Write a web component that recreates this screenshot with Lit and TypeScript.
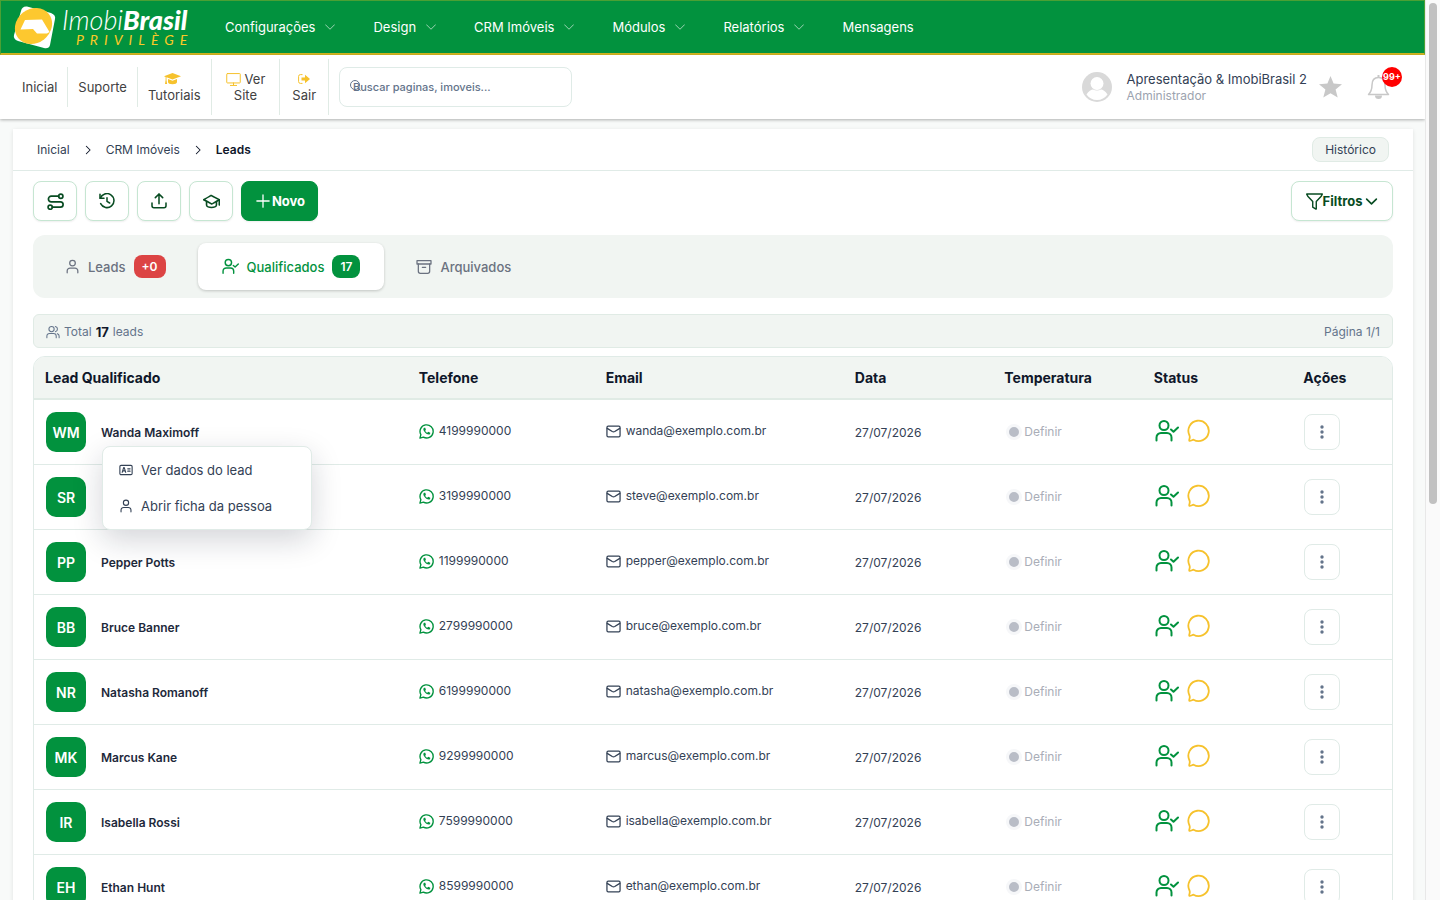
import { LitElement, html, css, svg, nothing } from "lit";
import { customElement, property } from "lit/decorators.js";

interface Lead {
  initials: string;
  name: string;
  phone: string;
  email: string;
}

const leads: Lead[] = [
  { initials: "WM", name: "Wanda Maximoff", phone: "4199990000", email: "wanda@exemplo.com.br" },
  { initials: "SR", name: "", phone: "3199990000", email: "steve@exemplo.com.br" },
  { initials: "PP", name: "Pepper Potts", phone: "1199990000", email: "pepper@exemplo.com.br" },
  { initials: "BB", name: "Bruce Banner", phone: "2799990000", email: "bruce@exemplo.com.br" },
  { initials: "NR", name: "Natasha Romanoff", phone: "6199990000", email: "natasha@exemplo.com.br" },
  { initials: "MK", name: "Marcus Kane", phone: "9299990000", email: "marcus@exemplo.com.br" },
  { initials: "IR", name: "Isabella Rossi", phone: "7599990000", email: "isabella@exemplo.com.br" },
  { initials: "EH", name: "Ethan Hunt", phone: "8599990000", email: "ethan@exemplo.com.br" },
];

const date = "27/07/2026";

/* Line icons on a 24-unit grid, coloured by currentColor. */
const icons: Record<string, unknown> = {
  down: svg`<path d="M3 7.500l9 9 9-9"/>`,
  right: svg`<path d="M8 3l9 9-9 9"/>`,
  route: svg`<circle cx="4.500" cy="20" r="3"/><circle cx="19.500" cy="4.500" r="3"/><path d="M16.500 4.500H6a4 4 0 0 0 0 8h13a3.700 3.700 0 0 1 0 7.500H7.500"/>`,
  history: svg`<path d="M1.500 2v6h6"/><path d="M2 8A10.500 10.500 0 1 1 2.500 16"/><path d="M12 7v5.500l4 2.500"/>`,
  upload: svg`<path d="M12 16V2"/><path d="M6.500 7L12 1.500 17.500 7"/><path d="M1.500 15v4a3 3 0 0 0 3 3h15a3 3 0 0 0 3-3v-4"/>`,
  grad: svg`<path d="M1 9.500Q12 3 12 3.500T23 9.500Q12 16 12 15.500T1 9.500z"/><path d="M5 12v5c0 2 3.500 3.500 7 3.500s7-1.500 7-3.500v-5"/><path d="M23 9.500V17"/>`,
  plus: svg`<path d="M12 1.500v21M1.500 12h21"/>`,
  funnel: svg`<path d="M1 1.500h22l-1.500 3L14.500 12v10.500h-1l-4-2.500v-8l-7-7.500z"/>`,
  user: svg`<circle cx="12" cy="6.500" r="4.500"/><path d="M3.500 22v-3a4.500 4.500 0 0 1 4.500-4.500h8a4.500 4.500 0 0 1 4.500 4.500v3"/>`,
  userCheck: svg`<circle cx="9" cy="6.500" r="4.500"/><path d="M1.500 21.500v-3a4.500 4.500 0 0 1 4.500-4.500h6a4.500 4.500 0 0 1 4.500 4.500v3"/><path d="M16 10.500l2.500 2.300 4.500-4.300"/>`,
  users: svg`<circle cx="9.500" cy="7" r="4.500"/><path d="M1.500 22v-3a4.500 4.500 0 0 1 4.500-4.500h7a4.500 4.500 0 0 1 4.500 4.500v3"/><path d="M16 2.500a4.600 4.600 0 0 1 0 9"/><path d="M22.500 22v-3a4.500 4.500 0 0 0-3-4.200"/>`,
  archive: svg`<path d="M1.500 2.500h21v5h-21z"/><path d="M3.500 7.500v11a3 3 0 0 0 3 3h11a3 3 0 0 0 3-3v-11"/><path d="M9.500 12.500h5"/>`,
  mail: svg`<rect x="1.500" y="3.500" width="21" height="17" rx="2"/><path d="M2 7l8 5q2 1 4 0l8-5"/>`,
  chat: svg`<path d="M2.500 16.500A10.200 10.200 0 1 1 6.500 20.700C5 21 4 22 2.300 21.800 1.800 20.500 3.500 19 2.500 16.500z"/>`,
  card: svg`<rect x="1.500" y="4" width="21" height="16" rx="2"/><path d="M5.500 16l2.500-8h1l2.500 8M6.500 13.500h4M15 10h4M15 14h4"/>`,
  monitor: svg`<rect x="1.200" y="2.500" width="21.600" height="15" rx="1"/><path d="M7 21.500h10M12 17.500v4"/>`,
};

const icon = (name: string, size: number, width = 2) => html`<svg
  class="ico" width=${size} height=${size} viewBox="0 0 24 24" fill="none" stroke="currentColor"
  stroke-width=${width} stroke-linecap="round" stroke-linejoin="round" aria-hidden="true">${icons[name]}</svg>`;

const shared = css`
  :host { display: block; font-family: Inter, "Noto Sans", sans-serif; }
  *, *::before, *::after { box-sizing: border-box; }
  .ico { display: block; flex: none; }
  a { color: inherit; text-decoration: none; }
  button { font: inherit; color: inherit; cursor: pointer; margin: 0; }
`;

@customElement("main-nav")
export class MainNav extends LitElement {
  static styles = [shared, css`
    .bar {
      display: flex; align-items: center; height: 55px; padding-left: 12px;
      background: #02923e; color: #fff;
      border: 1px solid #4ba034; border-bottom: 2px solid #d2b51f;
    }
    .brand { display: flex; align-items: center; gap: 6px; width: 212px; }
    .words { display: grid; padding-top: 2px; font-family: Lato, sans-serif; font-style: italic; color: #fff; }
    .name { font-size: 27px; line-height: 24px; font-weight: 300; white-space: nowrap; }
    .name b { font-weight: 900; }
    .tier { padding-left: 14px; font-size: 14px; line-height: 16px; letter-spacing: 6px; color: #fbc926; }
    nav { display: flex; gap: 37px; }
    .link { display: flex; align-items: center; gap: 9px; font-size: 13px; line-height: 20px; }
    .link .ico { opacity: .6; }
  `];

  render() {
    const items = ["Configurações", "Design", "CRM Imóveis", "Módulos", "Relatórios"];
    return html`<header class="bar">
      <a class="brand" href="#" aria-label="ImobiBrasil Privilège">
        <svg class="ico" width="43" height="43" viewBox="0 0 43 43" aria-hidden="true">
          <path d="M14 .5l24 6.500q5 2 4 6l-5 26q-1 4-6 3L5 35q-5-2-4-6L8 5Q9 0 14 .5z" fill="#fff"/>
          <ellipse cx="20.500" cy="20" rx="19.500" ry="17" transform="rotate(-38 20.500 20)" fill="#fdc82f"/>
          <path d="M7.500 23.500L12 14l17-.5 7.500 12.500-2.500 1.500H24L20 23z" fill="#fff"/>
        </svg>
        <span class="words"><span class="name">Imobi<b>Brasil</b></span><span class="tier">PRIVILÈGE</span></span>
      </a>
      <nav>
        ${items.map((t) => html`<a class="link" href="#">${t}${icon("down", 12, 2)}</a>`)}
        <a class="link" href="#">Mensagens</a>
      </nav>
    </header>`;
  }
}

@customElement("quick-bar")
export class QuickBar extends LitElement {
  static styles = [shared, css`
    :host { position: relative; }
    .bar {
      display: flex; align-items: center; height: 64px; padding: 0 34px 0 12px;
      background: #fff; box-shadow: 0 1px 3px rgba(0, 0, 0, .3);
    }
    .links { display: flex; align-items: center; color: #414141; font-size: 13px; line-height: 16px; text-align: center; }
    .links a { display: grid; place-content: center; padding: 0 10px; height: 40px; border-right: 1px solid #e0ebe5; }
    .links .tall { height: 56px; }
    .links .site { padding: 0 14px; }
    .links .exit { padding: 0 12px; }
    .stack { display: flex; justify-content: center; align-items: center; gap: 4px; height: 16px; }
    .stack .ico { color: #f6c22d; }
    .tall svg:only-child { margin-right: 3px; }
    .exit svg:only-child { margin-right: 0; }
    .search {
      position: relative; display: flex; align-items: center; width: 233px; height: 40px; margin-left: 10px;
      padding-left: 13px; border: 1px solid #dfebe7; border-radius: 8px; color: #64748b;
    }
    .glass { position: absolute; left: 10px; top: 12px; }
    .search input {
      flex: 1; min-width: 0; border: 0; outline: 0; background: none; padding: 0;
      font: 500 11px/16px Inter, sans-serif; color: #64748b;
    }
    .search input::placeholder { color: #64748b; opacity: 1; }
    .user { display: flex; align-items: center; margin-left: auto; color: #334155; }
    .who { display: grid; margin: 0 12px 0 15px; font-size: 13px; line-height: 17px; text-align: left; }
    .who small { font-size: 12px; line-height: 16px; color: #9ca3af; }
    .bell { position: relative; margin-left: 25px; padding: 0; border: 0; background: none; display: block; }
    .count {
      position: absolute; left: 15px; top: -8px; width: 20px; height: 20px; border-radius: 50%;
      background: #f00; color: #fff; font-size: 9px; font-weight: 700; line-height: 20px; text-align: center;
    }
  `];

  render() {
    return html`<div class="bar">
      <nav class="links">
        <a href="#">Inicial</a>
        <a href="#">Suporte</a>
        <a class="tall" href="#"><span class="stack">
          <svg width="17" height="12" viewBox="0 0 17 12" fill="#f6c22d" aria-hidden="true"><path d="M0 3.300L8.500 0 17 3.300 8.500 6.600 2.500 4.300V7l.6 4H1l.6-4V4z"/><path d="M4 6l4.500 1.800L13 6v3c0 1.300-2 2.300-4.500 2.300S4 10.300 4 9z"/></svg>
        </span>Tutoriais</a>
        <a class="tall site" href="#"><span class="stack">${icon("monitor", 15, 1.600)}<span>Ver</span></span>Site</a>
        <a class="tall exit" href="#"><span class="stack">
          <svg width="12" height="10" viewBox="0 0 12 10" aria-hidden="true"><path d="M4.500.6H2.400A1.800 1.800 0 0 0 .6 2.400v5.200a1.800 1.800 0 0 0 1.800 1.800h2.100" fill="none" stroke="#f6c22d"/><path d="M3.500 3.500H7V.7L12 5 7 9.300V6.500H3.500z" fill="#f6c22d"/></svg>
        </span>Sair</a>
      </nav>
      <label class="search">
        <svg class="glass" width="12" height="12" viewBox="0 0 12 12" fill="none" stroke="#64748b" aria-hidden="true"><circle cx="5" cy="5" r="4.500"/><path d="M8.200 8.200l2.300 2.300"/></svg>
        <input type="text" placeholder="Buscar paginas, imoveis..." aria-label="Buscar paginas, imoveis" />
      </label>
      <div class="user">
        <svg width="30" height="30" viewBox="0 0 30 30" aria-hidden="true"><circle cx="15" cy="15" r="15" fill="#d9d9d9"/><circle cx="15" cy="11.500" r="6.500" fill="#fff"/><path d="M4.500 22.500c2-3.500 5-5 6.500-5 2.500 1.200 5.500 1.200 8 0 1.500 0 4.500 1.500 6.500 5A13 13 0 0 1 15 28 13 13 0 0 1 4.500 22.500z" fill="#fff"/></svg>
        <span class="who">Apresentação &amp; ImobiBrasil 2<small>Administrador</small></span>
        <svg width="23" height="22" viewBox="0 0 23 22" fill="#c8c8c8" aria-hidden="true"><path d="M11.500 0l3.100 7.600 8.400.6-6.400 5.300 2.100 8.100-7.200-4.400-7.200 4.400 2.100-8.100L0 8.200l8.400-.6z"/></svg>
        <button class="bell" aria-label="Notificações">
          <svg class="ico" width="24" height="25" viewBox="0 0 24 25" aria-hidden="true"><path d="M11.500 2.500c-4.500 0-6.500 3.500-6.500 7.500 0 5-1.500 7.500-3.500 9.500h20c-2-2-3.500-4.500-3.500-9.500 0-4-2-7.500-6.500-7.500z" fill="none" stroke="#c8c8c8" stroke-width="1.500" stroke-linejoin="round"/><path d="M11.500 0v2.500" stroke="#c8c8c8" stroke-width="2"/><path d="M8 20.500h7a3.500 3.500 0 0 1-7 0z" fill="#c8c8c8"/></svg>
          <span class="count">99+</span>
        </button>
      </div>
    </div>`;
  }
}

@customElement("lead-menu")
export class LeadMenu extends LitElement {
  static styles = [shared, css`
    :host {
      position: absolute; left: 68px; top: 46px; z-index: 2; width: 210px; padding: 5px 4px;
      background: #fff; border: 1px solid #e0ebe7; border-radius: 8px;
      box-shadow: 0 10px 30px rgba(15, 23, 42, .18);
    }
    .item {
      display: flex; align-items: center; gap: 8px; width: 100%; height: 36px; padding: 0 12px;
      border: 0; background: none; font-size: 13px; color: #334155;
    }
  `];

  render() {
    return html`
      <button class="item">${icon("card", 14, 1.900)}Ver dados do lead</button>
      <button class="item">${icon("user", 14, 1.900)}Abrir ficha da pessoa</button>`;
  }
}

@customElement("leads-table")
export class LeadsTable extends LitElement {
  @property({ attribute: false }) rows: Lead[] = [];

  static styles = [shared, css`
    .frame { border: 1px solid #e0ebe7; border-radius: 12px; }
    table { width: 100%; table-layout: fixed; border-collapse: separate; border-spacing: 0; }
    th, td { padding: 0 11px; text-align: left; white-space: nowrap; }
    th {
      height: 43px; background: #f1f5f2; border-bottom: 2px solid #e0ebe5;
      color: #0f172a; font-size: 14px; font-weight: 700;
    }
    th:first-child { border-top-left-radius: 11px; }
    th:last-child { border-top-right-radius: 11px; }
    td { height: 65px; position: relative; border-bottom: 1px solid #e0ebe7; color: #334155; font-size: 12px; line-height: 18px; }
    td.in { padding: 0 12px; }
    td.day { padding-top: 2px; }
    .w30 { width: 30%; } .w15 { width: 15%; } .w20 { width: 20%; } .w12 { width: 12%; } .w8 { width: 8%; }
    .flex { display: flex; align-items: center; }
    .person { gap: 15px; color: #1e293b; font-weight: 600; }
    .label { padding-top: 2px; }
    .badge {
      width: 40px; height: 40px; border-radius: 10px; background: #02923e; color: #fff;
      padding-top: 2px; display: grid; place-items: center; font-size: 14px; font-weight: 600;
    }
    .contact { gap: 5px; padding-bottom: 2px; }
    .wa { color: #02923e; }
    .temp { gap: 2px; padding: 0; border: 0; background: none; color: #a9adb7; }
    .dot { width: 16px; height: 16px; border: 3px solid #f6f7f9; border-radius: 50%; background: #b9bdc7; margin-left: 1px; }
    .status { gap: 8px; padding-bottom: 2px; }
    .ok { color: #02923e; } .msg { color: #f6c22d; }
    .more { display: grid; place-items: center; width: 36px; height: 36px; padding: 0; background: #fff; border: 1px solid #e0ebe7; border-radius: 8px; color: #64748b; }
  `];

  render() {
    return html`<div class="frame"><table>
      <thead><tr>
        <th class="w30">Lead Qualificado</th><th class="w15">Telefone</th><th class="w20">Email</th><th class="w12">Data</th>
        <th class="w12">Temperatura</th><th class="w12">Status</th><th class="w8">Ações</th>
      </tr></thead>
      <tbody>${this.rows.map((r, i) => html`<tr>
        <td class="in"><div class="flex person"><span class="badge">${r.initials}</span><span class="label">${r.name}</span></div>${i === 0 ? html`<lead-menu></lead-menu>` : nothing}</td>
        <td><a class="flex contact" href="#">
          <svg class="ico wa" width="15" height="15" viewBox="0 0 24 24" fill="none" stroke="currentColor" stroke-width="2.200" stroke-linejoin="round" aria-hidden="true"><path d="M1.500 22.500l1.500-5.500A10.500 10.500 0 1 1 7 21z"/><path d="M8.200 6c-2 1-1.700 4 1.100 7.200s6.700 4.800 8.500 2.600l.2-1.800-3.200-1.500-1.600 1.500c-1.500-.5-2.700-1.700-3.200-3.200L11 9l-1-3z" fill="currentColor" stroke="none"/></svg>
          ${r.phone}</a></td>
        <td><a class="flex contact" href="#">${icon("mail", 15, 2)}${r.email}</a></td>
        <td class="day">${date}</td>
        <td class="in"><button class="flex temp"><span class="dot"></span>Definir</button></td>
        <td class="in"><div class="flex status"><span class="ok">${icon("userCheck", 24, 2)}</span><span class="msg">${icon("chat", 24, 1.800)}</span></div></td>
        <td class="in"><button class="more" aria-label="Ações de ${r.initials}">
          <svg width="4" height="14" viewBox="0 0 4 14" fill="currentColor" aria-hidden="true"><circle cx="2" cy="2" r="1.700"/><circle cx="2" cy="7" r="1.700"/><circle cx="2" cy="12" r="1.700"/></svg>
        </button></td>
      </tr>`)}</tbody>
    </table></div>`;
  }
}

@customElement("app-root")
export class AppRoot extends LitElement {
  static styles = [shared, css`
    :host { display: grid; grid-template-columns: minmax(0, 1fr) 15px; height: 100vh; background: #f8faf9; }
    .page { overflow-y: auto; scrollbar-width: none; }
    .track { padding: 3px; background: #fafafa; border-left: 1px solid #e8e8e8; }
    .thumb { height: 56%; margin-left: 0; width: 8px; border-radius: 4px; background: #c1c1c1; }
    main { margin: 10px 12px 0 13px; background: #fff; box-shadow: 0 1px 4px rgba(0, 0, 0, .1); }
    .crumbs {
      display: flex; align-items: center; height: 42px; padding: 0 24px;
      border-bottom: 1px solid #e0ebe7; font-size: 12px; line-height: 18px; color: #334155;
    }
    .crumbs .ico { margin: 0 13px; color: #0f172a; }
    .crumbs strong { font-weight: 600; color: #0f172a; }
    .pill { margin-left: auto; height: 25px; padding: 0 12px; background: #f1f5f2; border: 1px solid #e0ebe5; border-radius: 8px; }
    .body { padding: 10px 20px; }
    .tools { display: flex; gap: 8px; }
    .tool {
      display: flex; align-items: center; justify-content: center; width: 44px; height: 40px; padding: 0;
      background: #fff; color: #084c22; border: 1px solid #c6e6d2; border-radius: 8px; box-shadow: 0 1px 2px rgba(0, 0, 0, .07);
      font-size: 13px; font-weight: 700;
    }
    .new { width: 77px; gap: 2px; padding-left: 2px; background: #02923e; border-color: #02923e; color: #fff; }
    .filter { width: 102px; margin-left: auto; }
    .filter .ico:last-child { margin-left: 3px; }
    .tabs { display: flex; margin-top: 14px; padding: 8px; background: #f1f5f2; border-radius: 12px; height: 63px; gap: 8px; }
    .tab {
      display: flex; align-items: center; gap: 8px; padding: 0 24px; border: 0; border-radius: 8px;
      background: none; color: #6b7280; font-size: 13px; font-weight: 500;
    }
    .tab.on { background: #fff; color: #02923e; box-shadow: 0 1px 3px rgba(0, 0, 0, .2); }
    .num { height: 23px; padding: 0 8px; border-radius: 8px; background: #02923e; color: #fff; font-size: 12px; line-height: 23px; font-weight: 600; }
    .num.red { background: #dc4444; }
    .sum {
      display: flex; align-items: center; gap: 4px; height: 34px; margin: 16px 0 8px; padding: 1px 12px 0;
      background: #f1f5f2; border: 1px solid #e0ebe5; border-radius: 6px; font-size: 12px; line-height: 18px; color: #64748b;
    }
    .sum b { color: #0f172a; font-size: 13px; font-weight: 700; }
    .sum .pg { margin-left: auto; }
  `];

  render() {
    return html`
      <div class="page">
        <main-nav></main-nav>
        <quick-bar></quick-bar>
        <main>
          <div class="crumbs">
            <a href="#">Inicial</a>${icon("right", 10, 2.500)}<a href="#">CRM Imóveis</a>${icon("right", 10, 2.500)}<strong>Leads</strong>
            <button class="pill">Histórico</button>
          </div>
          <div class="body">
            <div class="tools">
              <button class="tool" aria-label="Fluxo">${icon("route", 17, 2.400)}</button>
              <button class="tool" aria-label="Histórico">${icon("history", 16, 2.300)}</button>
              <button class="tool" aria-label="Exportar">${icon("upload", 16, 2.300)}</button>
              <button class="tool" aria-label="Tutoriais">${icon("grad", 17, 2.300)}</button>
              <button class="tool new">${icon("plus", 14, 2.200)}Novo</button>
              <button class="tool filter">${icon("funnel", 17, 2)}Filtros${icon("down", 13, 3)}</button>
            </div>
            <div class="tabs">
              <button class="tab">${icon("user", 15, 2)}Leads<span class="num red">+0</span></button>
              <button class="tab on">${icon("userCheck", 17, 2)}Qualificados<span class="num">17</span></button>
              <button class="tab">${icon("archive", 16, 1.900)}Arquivados</button>
            </div>
            <div class="sum">${icon("users", 14, 1.800)}<span>Total</span><b>17</b><span>leads</span><span class="pg">Página 1/1</span></div>
            <leads-table .rows=${leads}></leads-table>
          </div>
        </main>
      </div>
      <div class="track"><div class="thumb"></div></div>`;
  }
}
